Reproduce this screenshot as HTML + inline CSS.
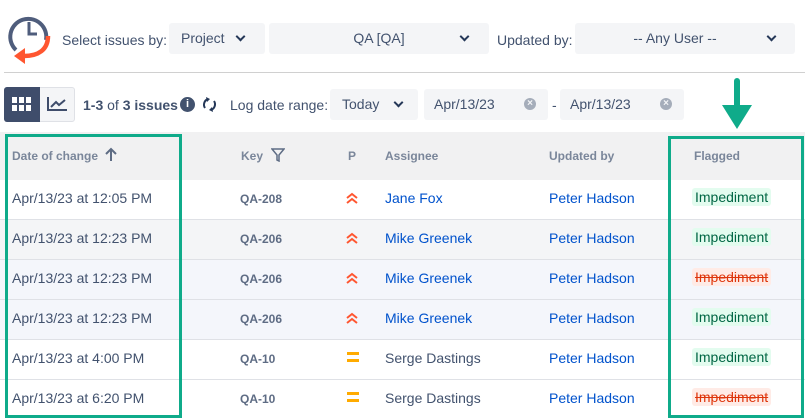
<!DOCTYPE html>
<html><head><meta charset="utf-8"><style>
*{box-sizing:border-box;margin:0;padding:0}
body{width:805px;height:419px;overflow:hidden;background:#fff;font-family:"Liberation Sans",Arial,sans-serif;color:#42526e;position:relative}
.a{position:absolute}
.dd{position:absolute;background:#f4f5f7;border-radius:3px;height:31px;font-size:14px;color:#42526e;line-height:31px}
.chev{position:absolute;top:12px;width:7px;height:7px;border-right:2px solid #253858;border-bottom:2px solid #253858;transform:rotate(45deg)}
.t{position:absolute;font-size:14px;line-height:16px}
.row{position:absolute;left:0;width:805px;height:40px;border-top:1px solid #dfe1e6}
.c{position:absolute;top:10px;font-size:14px;line-height:16px;white-space:nowrap}
.key{font-weight:bold;font-size:12px;color:#5e6c84;top:11px}
.lnk{color:#0052cc}
.tag{position:absolute;top:8px;left:692px;padding:1px 3px;font-size:14px;line-height:16px;border-radius:3px}
.g{background:#e3fcef;color:#006644}
.r{background:#ffebe6;color:#de350b;text-decoration:line-through}
.h{position:absolute;font-size:12px;font-weight:bold;color:#7a869a;top:149px}
.pr{position:absolute;left:345px;top:12px}
</style></head><body>
<svg class="a" style="left:6px;top:10px" width="48" height="56" viewBox="0 0 48 56">
<path d="M10 40 A18 18 0 1 1 40 30" fill="none" stroke="#4f5d7c" stroke-width="4"/>
<path d="M23 12 V24 H31" fill="none" stroke="#4f5d7c" stroke-width="3"/>
<path d="M42 26 C42 40 32 46 18 46" fill="none" stroke="#ff5630" stroke-width="4.5"/>
<path d="M8 46 L19 38 L19 54 Z" fill="#ff5630"/>
</svg>
<div class="t" style="left:62px;top:32px;color:#42526e">Select issues by:</div>
<div class="dd" style="left:169px;top:23px;width:96px;padding-left:12px">Project<span class="chev" style="left:68px;top:10px"></span></div>
<div class="dd" style="left:269px;top:23px;width:220px;text-align:center">QA [QA]<span class="chev" style="left:192px;top:10px"></span></div>
<div class="t" style="left:497px;top:32px">Updated by:</div>
<div class="dd" style="left:575px;top:23px;width:220px;text-align:center;padding-right:20px">-- Any User --<span class="chev" style="left:193px;top:10px"></span></div>
<div class="a" style="left:4px;top:72px;width:801px;height:1px;background:#d0d0d0"></div>

<div class="a" style="left:4px;top:87px;width:71px;height:35px;border:1px solid #dfe1e6;border-radius:3px;background:#f4f5f7"></div>
<div class="a" style="left:4px;top:87px;width:36px;height:35px;background:#3f4d6b;border-radius:3px 0 0 3px"></div>
<svg class="a" style="left:12px;top:97px" width="20" height="16"><g fill="#fff"><rect x="0" y="0" width="5" height="6"/><rect x="7" y="0" width="5" height="6"/><rect x="14" y="0" width="5" height="6"/><rect x="0" y="8" width="5" height="6"/><rect x="7" y="8" width="5" height="6"/><rect x="14" y="8" width="5" height="6"/></g></svg>
<svg class="a" style="left:47px;top:96px" width="22" height="16"><path d="M1 1 V14 H20" fill="none" stroke="#3f4d6b" stroke-width="2"/><path d="M4 11 L9 6 L12 9 L18 4" fill="none" stroke="#3f4d6b" stroke-width="2"/></svg>
<div class="t" style="left:83px;top:97px;color:#42526e"><b>1-3</b> of <b>3 issues</b></div>
<div class="a" style="left:180px;top:97px;width:15px;height:15px;border-radius:50%;background:#42526e;color:#fff;font-size:11px;font-weight:bold;text-align:center;line-height:15px">i</div>
<svg class="a" style="left:202px;top:96px" width="15" height="17" viewBox="0 0 15 17"><path d="M3 12 A6 6 0 0 1 6 3" fill="none" stroke="#253858" stroke-width="2"/><path d="M12 5 A6 6 0 0 1 9 14" fill="none" stroke="#253858" stroke-width="2"/><path d="M4 1 L8 3 L5 6Z M11 16 L7 14 L10 11Z" fill="#253858"/></svg>
<div class="t" style="left:230px;top:97px">Log date range:</div>
<div class="dd" style="left:330px;top:89px;width:88px;padding-left:12px">Today<span class="chev" style="left:65px;top:10px"></span></div>
<div class="dd" style="left:424px;top:89px;width:124px;padding-left:10px">Apr/13/23<span class="a" style="left:100px;top:9px;width:12px;height:12px;border-radius:50%;background:#a5adba;color:#f4f5f7;font-size:10px;line-height:12px;text-align:center;font-weight:bold">×</span></div>
<div class="t" style="left:552px;top:97px">-</div>
<div class="dd" style="left:560px;top:89px;width:124px;padding-left:10px">Apr/13/23<span class="a" style="left:100px;top:9px;width:12px;height:12px;border-radius:50%;background:#a5adba;color:#f4f5f7;font-size:10px;line-height:12px;text-align:center;font-weight:bold">×</span></div>

<div class="a" style="left:0;top:132px;width:805px;height:48px;background:#f1f1f2"></div>
<div class="h" style="left:12px">Date of change</div>
<svg class="a" style="left:104px;top:147px" width="14" height="15"><path d="M7 14 V2 M2 7 L7 2 L12 7" fill="none" stroke="#5e6c84" stroke-width="2"/></svg>
<div class="h" style="left:241px">Key</div>
<svg class="a" style="left:271px;top:148px" width="14" height="14"><path d="M1 1 H13 L8 7 V13 L6 12 V7 Z" fill="none" stroke="#5e6c84" stroke-width="1.5"/></svg>
<div class="h" style="left:348px">P</div>
<div class="h" style="left:385px">Assignee</div>
<div class="h" style="left:549px">Updated by</div>
<div class="h" style="left:694px">Flagged</div>

<div class="row" style="top:180px;background:#fff;border-top:none">
<div class="c" style="left:12px">Apr/13/23 at 12:05 PM</div><div class="c key" style="left:240px">QA-208</div><svg class="pr" width="14" height="12"><path d="M2 6 L7 2 L12 6 M2 11 L7 7 L12 11" fill="none" stroke="#ff5630" stroke-width="2"/></svg><div class="c lnk" style="left:385px">Jane Fox</div><div class="c lnk" style="left:549px">Peter Hadson</div><span class="tag g">Impediment</span></div>
<div class="row" style="top:219px;background:#f4f5f7">
<div class="c" style="left:12px">Apr/13/23 at 12:23 PM</div><div class="c key" style="left:240px">QA-206</div><svg class="pr" width="14" height="12"><path d="M2 6 L7 2 L12 6 M2 11 L7 7 L12 11" fill="none" stroke="#ff5630" stroke-width="2"/></svg><div class="c lnk" style="left:385px">Mike Greenek</div><div class="c lnk" style="left:549px">Peter Hadson</div><span class="tag g">Impediment</span></div>
<div class="row" style="top:259px;background:#f4f6fb">
<div class="c" style="left:12px">Apr/13/23 at 12:23 PM</div><div class="c key" style="left:240px">QA-206</div><svg class="pr" width="14" height="12"><path d="M2 6 L7 2 L12 6 M2 11 L7 7 L12 11" fill="none" stroke="#ff5630" stroke-width="2"/></svg><div class="c lnk" style="left:385px">Mike Greenek</div><div class="c lnk" style="left:549px">Peter Hadson</div><span class="tag r">Impediment</span></div>
<div class="row" style="top:299px;background:#f4f6fb">
<div class="c" style="left:12px">Apr/13/23 at 12:23 PM</div><div class="c key" style="left:240px">QA-206</div><svg class="pr" width="14" height="12"><path d="M2 6 L7 2 L12 6 M2 11 L7 7 L12 11" fill="none" stroke="#ff5630" stroke-width="2"/></svg><div class="c lnk" style="left:385px">Mike Greenek</div><div class="c lnk" style="left:549px">Peter Hadson</div><span class="tag g">Impediment</span></div>
<div class="row" style="top:339px;background:#fff">
<div class="c" style="left:12px">Apr/13/23 at 4:00 PM</div><div class="c key" style="left:240px">QA-10</div><div class="a" style="left:347px;top:12px;width:12px;height:3px;background:#ffab00"></div><div class="a" style="left:347px;top:19px;width:12px;height:3px;background:#ffab00"></div><div class="c" style="left:385px">Serge Dastings</div><div class="c lnk" style="left:549px">Peter Hadson</div><span class="tag g">Impediment</span></div>
<div class="row" style="top:379px;background:#fff">
<div class="c" style="left:12px">Apr/13/23 at 6:20 PM</div><div class="c key" style="left:240px">QA-10</div><div class="a" style="left:347px;top:12px;width:12px;height:3px;background:#ffab00"></div><div class="a" style="left:347px;top:19px;width:12px;height:3px;background:#ffab00"></div><div class="c" style="left:385px">Serge Dastings</div><div class="c lnk" style="left:549px">Peter Hadson</div><span class="tag r">Impediment</span></div>

<div class="a" style="left:5px;top:134px;width:177px;height:284px;border:3px solid #0fab8a"></div>
<div class="a" style="left:668px;top:136px;width:136px;height:282px;border:3px solid #0fab8a"></div>
<div class="a" style="left:734px;top:78px;width:6px;height:30px;background:#0fab8a;border-radius:3px"></div>
<div class="a" style="left:722px;top:105px;width:0;height:0;border-left:15px solid transparent;border-right:15px solid transparent;border-top:24px solid #0fab8a"></div>
</body></html>
